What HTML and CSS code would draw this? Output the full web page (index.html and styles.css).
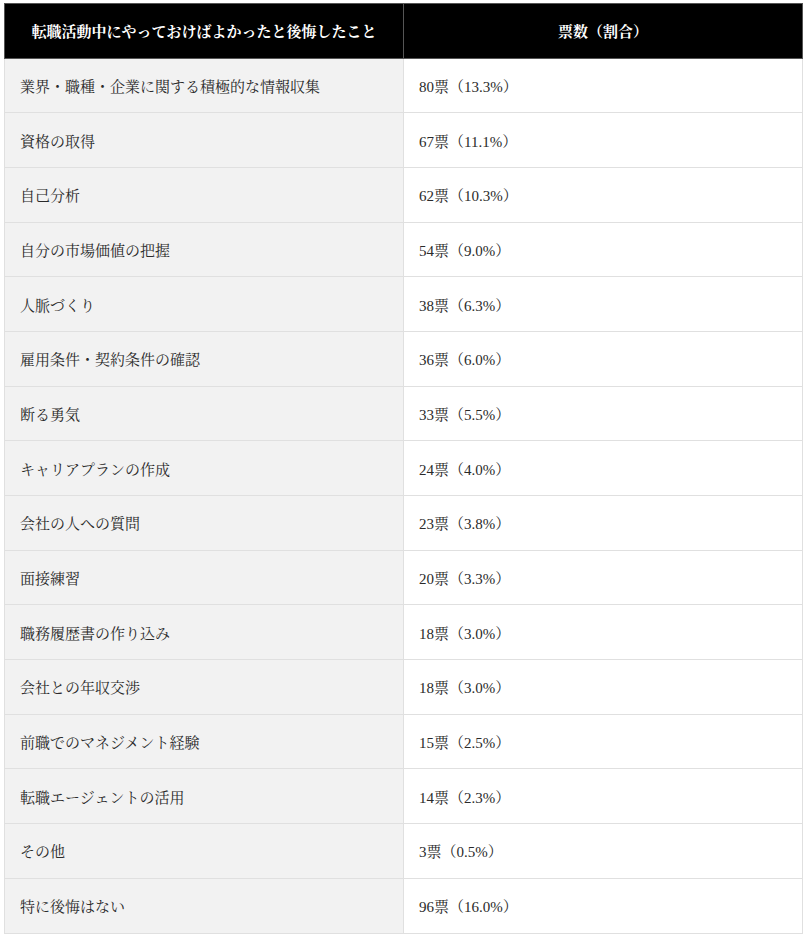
FILE: index.html
```html
<!DOCTYPE html>
<html lang="ja">
<head>
<meta charset="utf-8">
<title>転職活動中にやっておけばよかったと後悔したこと</title>
<link rel="stylesheet" href="styles.css">
</head>
<body>
<div class="wrap">
<table class="survey">
<thead>
<tr><th>転職活動中にやっておけばよかったと後悔したこと</th><th>票数（割合）</th></tr>
</thead>
<tbody>
<tr><td>業界・職種・企業に関する積極的な情報収集</td><td>80票（13.3%）</td></tr>
<tr><td>資格の取得</td><td>67票（11.1%）</td></tr>
<tr><td>自己分析</td><td>62票（10.3%）</td></tr>
<tr><td>自分の市場価値の把握</td><td>54票（9.0%）</td></tr>
<tr><td>人脈づくり</td><td>38票（6.3%）</td></tr>
<tr><td>雇用条件・契約条件の確認</td><td>36票（6.0%）</td></tr>
<tr><td>断る勇気</td><td>33票（5.5%）</td></tr>
<tr><td>キャリアプランの作成</td><td>24票（4.0%）</td></tr>
<tr><td>会社の人への質問</td><td>23票（3.8%）</td></tr>
<tr><td>面接練習</td><td>20票（3.3%）</td></tr>
<tr><td>職務履歴書の作り込み</td><td>18票（3.0%）</td></tr>
<tr><td>会社との年収交渉</td><td>18票（3.0%）</td></tr>
<tr><td>前職でのマネジメント経験</td><td>15票（2.5%）</td></tr>
<tr><td>転職エージェントの活用</td><td>14票（2.3%）</td></tr>
<tr><td>その他</td><td>3票（0.5%）</td></tr>
<tr><td>特に後悔はない</td><td>96票（16.0%）</td></tr>
</tbody>
</table>
</div>
</body>
</html>
```

FILE: styles.css
```css
html, body {
  margin: 0;
  padding: 0;
  background: #fff;
}
.wrap {
  padding: 3px 4px 0 4px;
}
.survey {
  width: 799px;
  border-collapse: collapse;
  table-layout: fixed;
  font-family: "Liberation Serif", "Noto Serif CJK JP", "Noto Sans CJK JP", serif;
  font-size: 15px;
  color: #2a2a2a;
}
.survey th {
  background: #000;
  color: #fff;
  font-weight: bold;
  text-align: center;
  height: 54.5px;
  padding: 0 10px;
  border: 1px solid #555;
  box-sizing: border-box;
}
.survey td {
  height: 54.7px;
  padding: 0 15px;
  border: 1px solid #e0e0e0;
  vertical-align: middle;
  box-sizing: border-box;
}
.survey td:first-child {
  background: #f2f2f2;
}
.survey th:first-child,
.survey td:first-child {
  width: 399px;
}
```
